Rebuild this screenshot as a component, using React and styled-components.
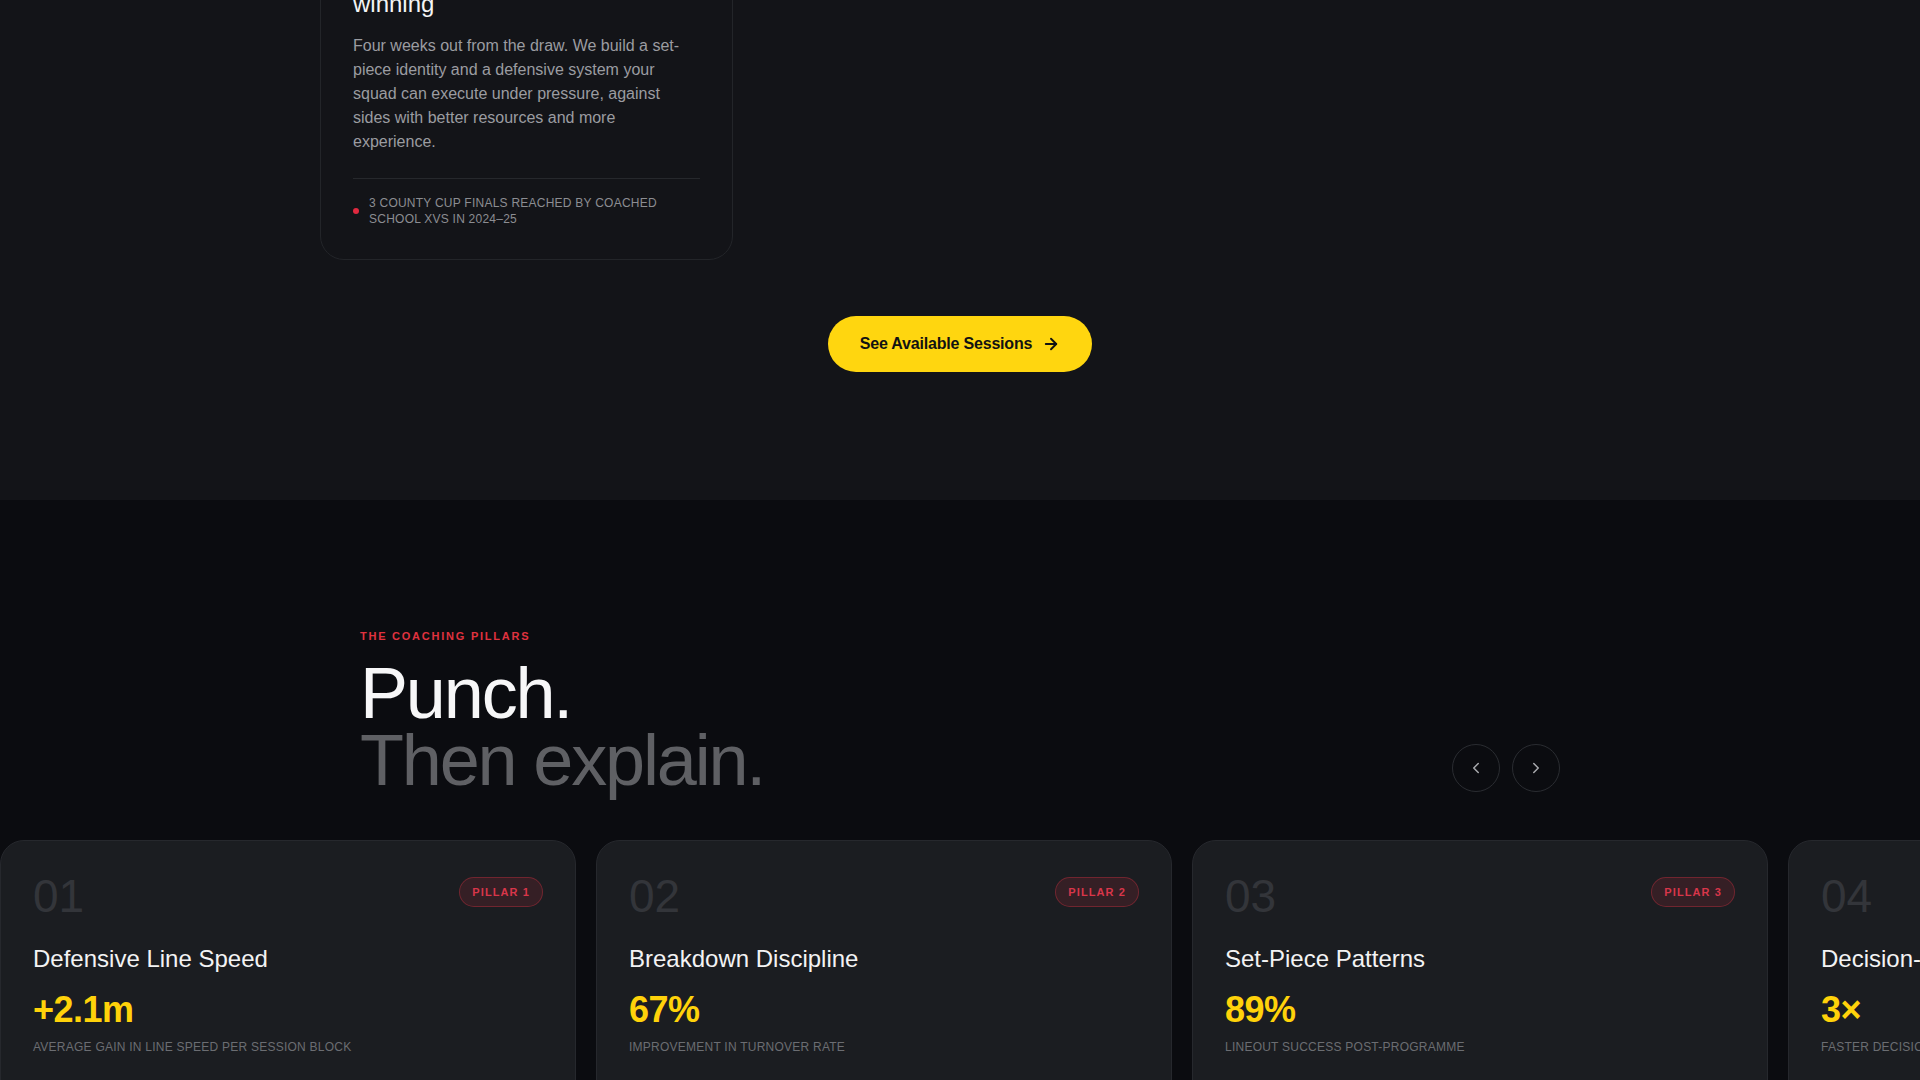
import styled, { createGlobalStyle } from 'styled-components'
import { ArrowRight, ChevronLeft, ChevronRight } from 'lucide-react'

const GlobalStyle = createGlobalStyle`
  * {
    box-sizing: border-box;
  }
  body {
    margin: 0;
    background: #0b0c10;
    font-family: "Liberation Sans", Arial, Helvetica, sans-serif;
    -webkit-font-smoothing: antialiased;
  }
`

const pillars = [
  {
    num: '01',
    title: 'Defensive Line Speed',
    value: '+2.1m',
    caption: 'Average gain in line speed per session block',
    body: 'Folding, spacing and the trigger to go. We drill the first three steps until the line moves as one.',
  },
  {
    num: '02',
    title: 'Breakdown Discipline',
    value: '67%',
    caption: 'Improvement in turnover rate',
    body: 'Body height, clean entries and legal jackals. Fewer penalties, more ball won on the floor.',
  },
  {
    num: '03',
    title: 'Set-Piece Patterns',
    value: '89%',
    caption: 'Lineout success post-programme',
    body: 'Calls, lifts and launch plays built around the players you actually have.',
  },
  {
    num: '04',
    title: 'Decision-Making',
    value: '3×',
    caption: 'Faster decisions in game scenarios',
    body: 'Scenario games that force reads under fatigue, so the right option comes first.',
  },
]

/* ---------- programme grid (scrolled, last row visible) ---------- */

const ProgrammeSection = styled.section`
  background: #131418;
  /* page sits scrolled a little way into the programme grid */
  margin-top: -74px;
  padding-bottom: 128px;
`

const ProgrammeGrid = styled.div`
  max-width: 1280px;
  margin: 0 auto;
  display: grid;
  grid-template-columns: repeat(3, 1fr);
  gap: 20px;
`

const ProgrammeCard = styled.article`
  display: flex;
  flex-direction: column;
  padding: 32px;
  background: #131418;
  border: 1px solid #232529;
  border-radius: 24px;
`

const ProgrammeTitle = styled.h3`
  margin: 0 0 15px;
  font-size: 24px;
  line-height: 30px;
  font-weight: 400;
  color: #f4f4f5;
`

const ProgrammeText = styled.p`
  margin: 0;
  font-size: 16px;
  line-height: 24px;
  color: #9b9ca1;
`

const ProgrammeFoot = styled.div`
  display: flex;
  align-items: center;
  gap: 10px;
  margin-top: 24px;
  padding-top: 16px;
  border-top: 1px solid #26282c;
`

const Dot = styled.span`
  flex: 0 0 6px;
  width: 6px;
  height: 6px;
  border-radius: 50%;
  background: #e0293f;
`

const FootNote = styled.span`
  font-size: 12px;
  line-height: 16px;
  letter-spacing: 0.02em;
  text-transform: uppercase;
  color: #8c8d92;
`

const CtaRow = styled.div`
  display: flex;
  justify-content: center;
  margin-top: 56px;
`

const CtaButton = styled.button`
  display: inline-flex;
  align-items: center;
  gap: 10px;
  height: 56px;
  padding: 0 32px;
  border: none;
  border-radius: 999px;
  background: #ffd60f;
  color: #121212;
  font-family: inherit;
  font-size: 16px;
  font-weight: 700;
  letter-spacing: -0.012em;
  cursor: pointer;
`

/* ---------- coaching pillars ---------- */

const PillarsSection = styled.section`
  background: #0b0c10;
  padding: 128px 0 120px;
  overflow: hidden;
`

const PillarsHeader = styled.div`
  max-width: 1200px;
  margin: 0 auto 46px;
  display: flex;
  justify-content: space-between;
  align-items: flex-end;
`

const Eyebrow = styled.div`
  margin-bottom: 16px;
  font-size: 11px;
  line-height: 16px;
  font-weight: 700;
  letter-spacing: 0.16em;
  text-transform: uppercase;
  color: #e0323f;
`

const Headline = styled.h2`
  margin: 0;
  font-size: 72px;
  line-height: 0.93;
  font-weight: 400;
  letter-spacing: -0.03em;
  color: #f7f7f8;
`

const Muted = styled.span`
  display: block;
  color: #5f6064;
`

const NavGroup = styled.div`
  display: flex;
  gap: 12px;
  margin-bottom: 2px;
`

const NavButton = styled.button`
  display: grid;
  place-items: center;
  width: 48px;
  height: 48px;
  padding: 0;
  border: 1px solid #2a2c31;
  border-radius: 50%;
  background: transparent;
  color: #a9aaae;
  cursor: pointer;
`

const Track = styled.div`
  display: flex;
  gap: 20px;
`

const PillarCard = styled.article`
  flex: 0 0 576px;
  display: flex;
  flex-direction: column;
  min-height: 420px;
  padding: 32px;
  background: #1b1d21;
  border: 1px solid #26282d;
  border-radius: 24px;
`

const PillarTop = styled.div`
  display: flex;
  justify-content: space-between;
  align-items: flex-start;
  margin-bottom: 24px;
`

const PillarNum = styled.span`
  font-size: 46px;
  line-height: 46px;
  font-weight: 300;
  color: #33353a;
`

const Badge = styled.span`
  margin-top: 4px;
  padding: 0 12px;
  height: 30px;
  display: inline-flex;
  align-items: center;
  border-radius: 999px;
  border: 1px solid rgba(214, 48, 66, 0.38);
  background: rgba(214, 48, 66, 0.14);
  color: #d8364a;
  font-size: 11px;
  font-weight: 700;
  letter-spacing: 0.1em;
  text-transform: uppercase;
`

const PillarTitle = styled.h3`
  margin: 0 0 16px;
  font-size: 24px;
  line-height: 1.3;
  font-weight: 400;
  color: #f3f3f4;
`

const PillarValue = styled.div`
  font-size: 36px;
  line-height: 1.1;
  font-weight: 700;
  letter-spacing: -0.015em;
  color: #ffd20a;
`

const PillarCaption = styled.div`
  margin-top: 9px;
  font-size: 12px;
  line-height: 16px;
  letter-spacing: 0.02em;
  text-transform: uppercase;
  color: #6b6d72;
`

const PillarBody = styled.p`
  margin: 24px 0 0;
  font-size: 16px;
  line-height: 24px;
  color: #9b9ca1;
`

const App = () => {
  return (
    <>
      <GlobalStyle />
      <ProgrammeSection>
        <ProgrammeGrid>
          <ProgrammeCard>
            <ProgrammeTitle>
              Cup run: competing to
              <br />
              winning
            </ProgrammeTitle>
            <ProgrammeText>
              Four weeks out from the draw. We build a set-piece identity and a defensive
              system your squad can execute under pressure, against sides with better
              resources and more experience.
            </ProgrammeText>
            <ProgrammeFoot>
              <Dot />
              <FootNote>3 county cup finals reached by coached school XVs in 2024–25</FootNote>
            </ProgrammeFoot>
          </ProgrammeCard>
        </ProgrammeGrid>
        <CtaRow>
          <CtaButton>
            See Available Sessions
            <ArrowRight size={18} strokeWidth={2.5} />
          </CtaButton>
        </CtaRow>
      </ProgrammeSection>

      <PillarsSection>
        <PillarsHeader>
          <div>
            <Eyebrow>The coaching pillars</Eyebrow>
            <Headline>
              Punch.
              <Muted>Then explain.</Muted>
            </Headline>
          </div>
          <NavGroup>
            <NavButton aria-label="Previous">
              <ChevronLeft size={18} strokeWidth={2} />
            </NavButton>
            <NavButton aria-label="Next">
              <ChevronRight size={18} strokeWidth={2} />
            </NavButton>
          </NavGroup>
        </PillarsHeader>
        <Track>
          {pillars.map((p, i) => (
            <PillarCard key={p.num}>
              <PillarTop>
                <PillarNum>{p.num}</PillarNum>
                <Badge>Pillar {i + 1}</Badge>
              </PillarTop>
              <PillarTitle>{p.title}</PillarTitle>
              <PillarValue>{p.value}</PillarValue>
              <PillarCaption>{p.caption}</PillarCaption>
              <PillarBody>{p.body}</PillarBody>
            </PillarCard>
          ))}
        </Track>
      </PillarsSection>
    </>
  )
}

export default App
